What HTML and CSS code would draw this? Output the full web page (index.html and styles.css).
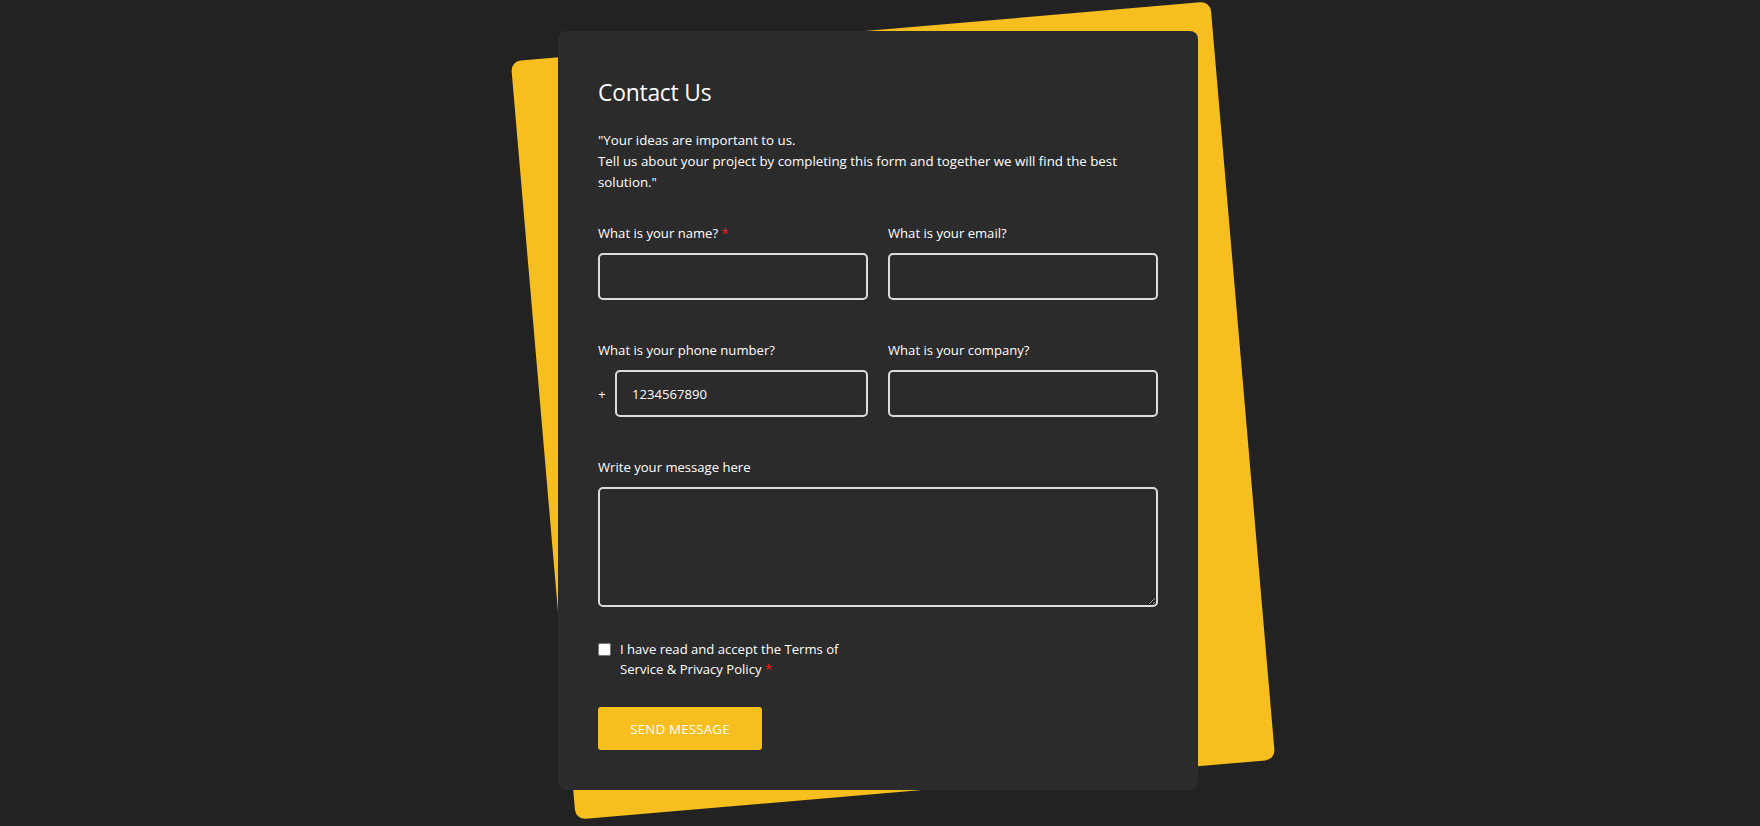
FILE: index.html
```html
<!DOCTYPE html>
<html lang="en">
<head>
<meta charset="utf-8">
<title>Contact Us</title>
<link rel="stylesheet" href="styles.css">
</head>
<body>
<div class="stage">
  <form class="card">
    <h2 class="title">Contact Us</h2>
    <p class="intro">"Your ideas are important to us.<br>Tell us about your project by completing this form and together we will find the best solution."</p>
    <div class="grid">
      <div class="field">
        <label class="label">What is your name? <span class="req">*</span></label>
        <input class="input" type="text">
      </div>
      <div class="field">
        <label class="label">What is your email?</label>
        <input class="input" type="email">
      </div>
      <div class="field">
        <label class="label">What is your phone number?</label>
        <div class="phone">
          <span class="plus">+</span>
          <input class="input" type="tel" value="1234567890">
        </div>
      </div>
      <div class="field">
        <label class="label">What is your company?</label>
        <input class="input" type="text">
      </div>
      <div class="field wide">
        <label class="label">Write your message here</label>
        <textarea class="textarea"></textarea>
      </div>
      <div class="field checkfield">
        <label class="check">
          <input class="box" type="checkbox">
          <span class="checktext">I have read and accept the Terms of Service &amp; Privacy Policy <span class="req">*</span></span>
        </label>
      </div>
    </div>
    <button class="send" type="button">SEND MESSAGE</button>
  </form>
</div>
</body>
</html>
```

FILE: styles.css
```css
* { box-sizing: border-box; }
html, body { margin: 0; }
body {
  background: #222222;
  height: 826px;
  overflow: hidden;
  display: flex;
  justify-content: center;
  align-items: flex-start;
  padding: 31px 4px 0 0;
  font-family: "Open Sans", "Noto Sans", sans-serif;
  color: #ffffff;
}
.stage {
  position: relative;
  width: 640px;
  isolation: isolate;
}
.stage::before {
  content: "";
  position: absolute;
  left: -16px;
  top: -1px;
  width: 702px;
  height: 761px;
  background: #f7be1f;
  border-radius: 10px;
  transform: rotate(-4.9deg);
  z-index: 0;
}
.card {
  position: relative;
  z-index: 1;
  background: #2b2b2b;
  border-radius: 8px;
  padding: 40px;
  height: 759px;
}
.title {
  margin: 2px 0 0;
  font-size: 22.8px;
  font-weight: 400;
  line-height: 40px;
  letter-spacing: -0.2px;
}
.intro {
  margin: 17px 0 0;
  font-size: 13.3px;
  line-height: 21px;
}
.grid {
  margin-top: 30px;
  display: grid;
  grid-template-columns: 270px 270px;
  column-gap: 20px;
  row-gap: 40px;
}
.field { display: flex; flex-direction: column; }
.wide { grid-column: 1 / 3; }
.label {
  font-size: 13.1px;
  line-height: 21px;
  margin-bottom: 9px;
}
.req { color: #ff1a1a; }
.input {
  display: block;
  width: 100%;
  height: 47px;
  background: transparent;
  border: 2px solid #dcdcdc;
  border-radius: 5px;
  color: #ffffff;
  font-family: inherit;
  font-size: 13.1px;
  padding: 0 15px;
  outline: none;
}
.phone {
  display: flex;
  align-items: center;
  gap: 9px;
}
.plus {
  font-size: 13px;
  width: 8px;
  text-align: center;
}
.phone .input { flex: 1; }
.textarea {
  display: block;
  width: 100%;
  height: 120px;
  background: transparent;
  border: 2px solid #dcdcdc;
  border-radius: 5px;
  color: #ffffff;
  font-family: inherit;
  font-size: 13px;
  padding: 10px 15px;
  outline: none;
  resize: vertical;
}
.checkfield { margin-top: -8px; }
.check {
  display: flex;
  align-items: flex-start;
  gap: 9px;
  font-size: 13.1px;
  line-height: 20px;
  padding-right: 20px;
}
.checktext { display: block; }
.box {
  margin: 4px 0 0 0;
  width: 13px;
  height: 13px;
  flex: none;
}
.send {
  margin-top: 28px;
  height: 43px;
  width: 164px;
  background: #f7be1f;
  border: none;
  border-radius: 3px;
  color: #ffffff;
  font-family: inherit;
  font-size: 13.3px;
  letter-spacing: 0.2px;
  cursor: pointer;
}
```
